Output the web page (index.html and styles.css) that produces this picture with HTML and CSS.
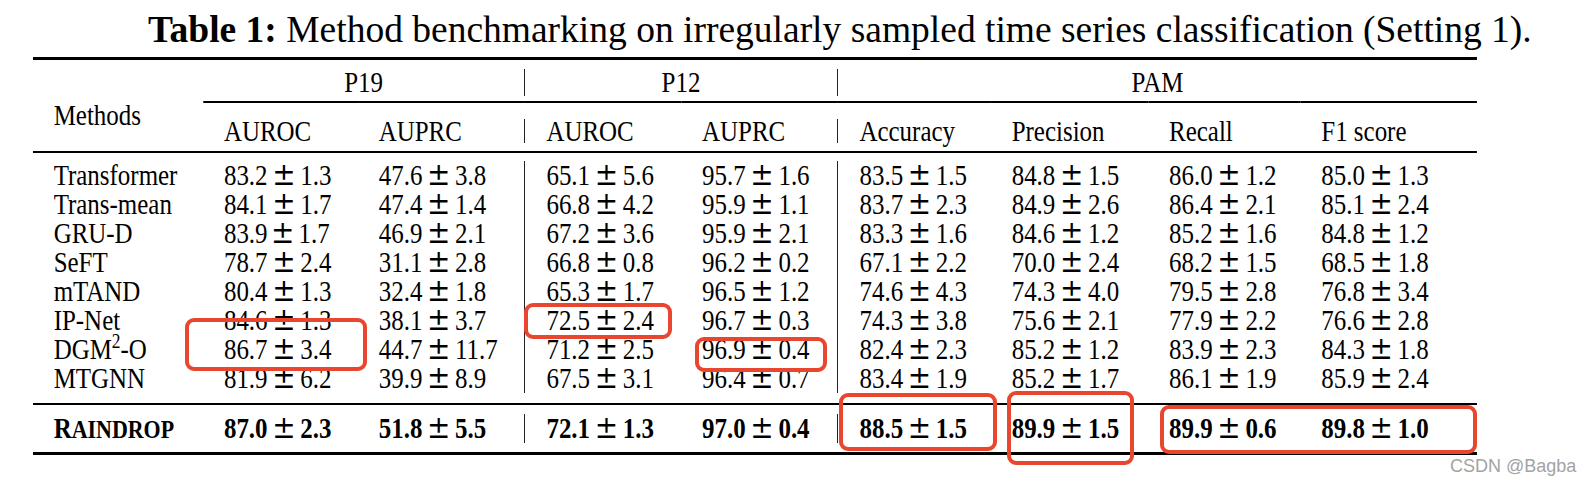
FILE: index.html
```html
<!DOCTYPE html>
<html lang="en">
<head>
  <meta charset="UTF-8">
  <title>Table 1</title>
  <link rel="stylesheet" href="styles.css">
</head>
<body>
  <div class="caption"><b>Table 1:</b> Method benchmarking on irregularly sampled time series classification (Setting 1).</div>

  <div class="table">
    <div class="grid head">
      <div class="methods">Methods</div>
      <div class="group p19">P19</div>
      <div class="group p12 sep">P12</div>
      <div class="group pam sep">PAM</div>

      <div class="sub"><span>AUROC</span></div>
      <div class="sub"><span>AUPRC</span></div>
      <div class="sub sep"><span>AUROC</span></div>
      <div class="sub"><span>AUPRC</span></div>
      <div class="sub sep"><span>Accuracy</span></div>
      <div class="sub"><span>Precision</span></div>
      <div class="sub"><span>Recall</span></div>
      <div class="sub"><span>F1 score</span></div>
    </div>

    <div class="body">
      <div class="grid row">
        <div>Transformer</div>
        <div>83.2<span class="pm">±</span>1.3</div>
        <div>47.6<span class="pm">±</span>3.8</div>
        <div class="sep">65.1<span class="pm">±</span>5.6</div>
        <div>95.7<span class="pm">±</span>1.6</div>
        <div class="sep">83.5<span class="pm">±</span>1.5</div>
        <div>84.8<span class="pm">±</span>1.5</div>
        <div>86.0<span class="pm">±</span>1.2</div>
        <div>85.0<span class="pm">±</span>1.3</div>
      </div>
      <div class="grid row">
        <div>Trans-mean</div>
        <div>84.1<span class="pm">±</span>1.7</div>
        <div>47.4<span class="pm">±</span>1.4</div>
        <div class="sep">66.8<span class="pm">±</span>4.2</div>
        <div>95.9<span class="pm">±</span>1.1</div>
        <div class="sep">83.7<span class="pm">±</span>2.3</div>
        <div>84.9<span class="pm">±</span>2.6</div>
        <div>86.4<span class="pm">±</span>2.1</div>
        <div>85.1<span class="pm">±</span>2.4</div>
      </div>
      <div class="grid row">
        <div>GRU-D</div>
        <div>83.9<span class="pm tight">±</span>1.7</div>
        <div>46.9<span class="pm">±</span>2.1</div>
        <div class="sep">67.2<span class="pm">±</span>3.6</div>
        <div>95.9<span class="pm">±</span>2.1</div>
        <div class="sep">83.3<span class="pm">±</span>1.6</div>
        <div>84.6<span class="pm">±</span>1.2</div>
        <div>85.2<span class="pm">±</span>1.6</div>
        <div>84.8<span class="pm">±</span>1.2</div>
      </div>
      <div class="grid row">
        <div>SeFT</div>
        <div>78.7<span class="pm">±</span>2.4</div>
        <div>31.1<span class="pm">±</span>2.8</div>
        <div class="sep">66.8<span class="pm">±</span>0.8</div>
        <div>96.2<span class="pm">±</span>0.2</div>
        <div class="sep">67.1<span class="pm">±</span>2.2</div>
        <div>70.0<span class="pm">±</span>2.4</div>
        <div>68.2<span class="pm">±</span>1.5</div>
        <div>68.5<span class="pm">±</span>1.8</div>
      </div>
      <div class="grid row">
        <div>mTAND</div>
        <div>80.4<span class="pm">±</span>1.3</div>
        <div>32.4<span class="pm">±</span>1.8</div>
        <div class="sep">65.3<span class="pm">±</span>1.7</div>
        <div>96.5<span class="pm">±</span>1.2</div>
        <div class="sep">74.6<span class="pm">±</span>4.3</div>
        <div>74.3<span class="pm">±</span>4.0</div>
        <div>79.5<span class="pm">±</span>2.8</div>
        <div>76.8<span class="pm">±</span>3.4</div>
      </div>
      <div class="grid row">
        <div>IP-Net</div>
        <div>84.6<span class="pm">±</span>1.3</div>
        <div>38.1<span class="pm">±</span>3.7</div>
        <div class="sep">72.5<span class="pm">±</span>2.4</div>
        <div>96.7<span class="pm">±</span>0.3</div>
        <div class="sep">74.3<span class="pm">±</span>3.8</div>
        <div>75.6<span class="pm">±</span>2.1</div>
        <div>77.9<span class="pm">±</span>2.2</div>
        <div>76.6<span class="pm">±</span>2.8</div>
      </div>
      <div class="grid row">
        <div>DGM<sup>2</sup>-O</div>
        <div>86.7<span class="pm">±</span>3.4</div>
        <div>44.7<span class="pm">±</span>11.7</div>
        <div class="sep">71.2<span class="pm">±</span>2.5</div>
        <div>96.9<span class="pm">±</span>0.4</div>
        <div class="sep">82.4<span class="pm">±</span>2.3</div>
        <div>85.2<span class="pm">±</span>1.2</div>
        <div>83.9<span class="pm">±</span>2.3</div>
        <div>84.3<span class="pm">±</span>1.8</div>
      </div>
      <div class="grid row">
        <div>MTGNN</div>
        <div>81.9<span class="pm">±</span>6.2</div>
        <div>39.9<span class="pm">±</span>8.9</div>
        <div class="sep">67.5<span class="pm">±</span>3.1</div>
        <div>96.4<span class="pm">±</span>0.7</div>
        <div class="sep">83.4<span class="pm">±</span>1.9</div>
        <div>85.2<span class="pm">±</span>1.7</div>
        <div>86.1<span class="pm">±</span>1.9</div>
        <div>85.9<span class="pm">±</span>2.4</div>
      </div>
    </div>

    <div class="foot">
      <div class="grid row">
        <div class="name">R<span class="sc">aindrop</span></div>
        <div>87.0<span class="pm">±</span>2.3</div>
        <div>51.8<span class="pm">±</span>5.5</div>
        <div class="sep">72.1<span class="pm">±</span>1.3</div>
        <div>97.0<span class="pm">±</span>0.4</div>
        <div class="sep">88.5<span class="pm">±</span>1.5</div>
        <div>89.9<span class="pm">±</span>1.5</div>
        <div>89.9<span class="pm">±</span>0.6</div>
        <div>89.8<span class="pm">±</span>1.0</div>
      </div>
    </div>
  </div>

  <!-- hand drawn highlight boxes -->
  <div class="mark mark-1"></div>
  <div class="mark mark-2"></div>
  <div class="mark mark-3"></div>
  <div class="mark mark-4"></div>
  <div class="mark mark-5"></div>
  <div class="mark mark-6"></div>

  <div class="watermark">CSDN @Bagba</div>
</body>
</html>
```

FILE: styles.css
```css
body {
  margin: 0;
  width: 1590px;
  height: 484px;
  position: relative;
  overflow: hidden;
  background-color: #fff;
  color: #000;
  font-family: "Liberation Serif", "Times New Roman", serif;
}

.caption {
  height: 57px;
  line-height: 60px;
  padding-left: 148px;
  font-size: 37.5px;
  white-space: nowrap;
}

/* the scanned table is a bit narrow, so squeeze it sideways */
.table {
  margin-left: 33px;
  width: 1679px;
  border-top: 3px solid #000;
  border-bottom: 3px solid #000;
  font-size: 29px;
  transform: scaleX(0.86);
  transform-origin: 0 0;
}

.grid {
  display: grid;
  grid-template-columns: 198px 180px 193px 183px 181px 179px 183px 177px 205px;
}

/* header */
.head {
  grid-template-rows: 41px 50px;
  border-bottom: 2px solid #000;
}

.methods {
  grid-row: 1 / 3;
  grid-column: 1;
  padding: 41px 0 0 24px;
  line-height: 29px;
}

.group {
  margin: 9px 0 5px;
  line-height: 27px;
  text-align: center;
}

.group.sep {
  border-left: 1px solid #000;
}

.p19 { grid-column: 2 / 4; }
.p12 { grid-column: 4 / 6; }
.pam { grid-column: 6 / 10; }

.sub {
  grid-row: 2;
  border-top: 2px solid #000;
  padding-top: 16px;
}

.sub span {
  display: block;
  line-height: 24px;
  padding-left: 24px;
  white-space: nowrap;
}

.sub.sep span {
  border-left: 1px solid #000;
  padding-left: 25px;
}

/* body rows */
.body {
  padding: 8px 0 10px;
  border-bottom: 2px solid #000;
}

.row > div {
  height: 29px;
  line-height: 29px;
  padding-left: 24px;
  white-space: nowrap;
}

.row > .sep {
  border-left: 1px solid #000;
  padding-left: 25px;
}

.pm {
  display: inline-block;
  width: 38px;
  text-align: center;
  font-family: "DejaVu Serif", serif;
  font-size: 1.12em;
  font-weight: normal;
  line-height: 20px;
}

.pm.tight {
  width: 32px;
  text-align: left;
  padding-left: 4px;
}

sup {
  font-size: 0.7em;
  line-height: 0;
}

.foot {
  padding: 9px 0;
  font-weight: bold;
}

.sc {
  font-size: 0.88em;
  text-transform: uppercase;
}

/* highlight boxes */
.mark {
  position: absolute;
  box-sizing: border-box;
  border: 4px solid #e8462e;
  border-radius: 9px;
}

.mark-1 { left: 185px; top: 318px; width: 182px; height: 53px; }
.mark-2 { left: 524px; top: 303px; width: 148px; height: 36px; }
.mark-3 { left: 695px; top: 337px; width: 132px; height: 35px; }
.mark-4 { left: 839px; top: 393px; width: 158px; height: 58px; }
.mark-5 { left: 1007px; top: 391px; width: 127px; height: 74px; }
.mark-6 { left: 1160px; top: 405px; width: 317px; height: 49px; }

.watermark {
  position: absolute;
  left: 1450px;
  top: 456px;
  font-family: "Liberation Sans", Arial, sans-serif;
  font-size: 18px;
  color: #a3a3a3;
}
```
